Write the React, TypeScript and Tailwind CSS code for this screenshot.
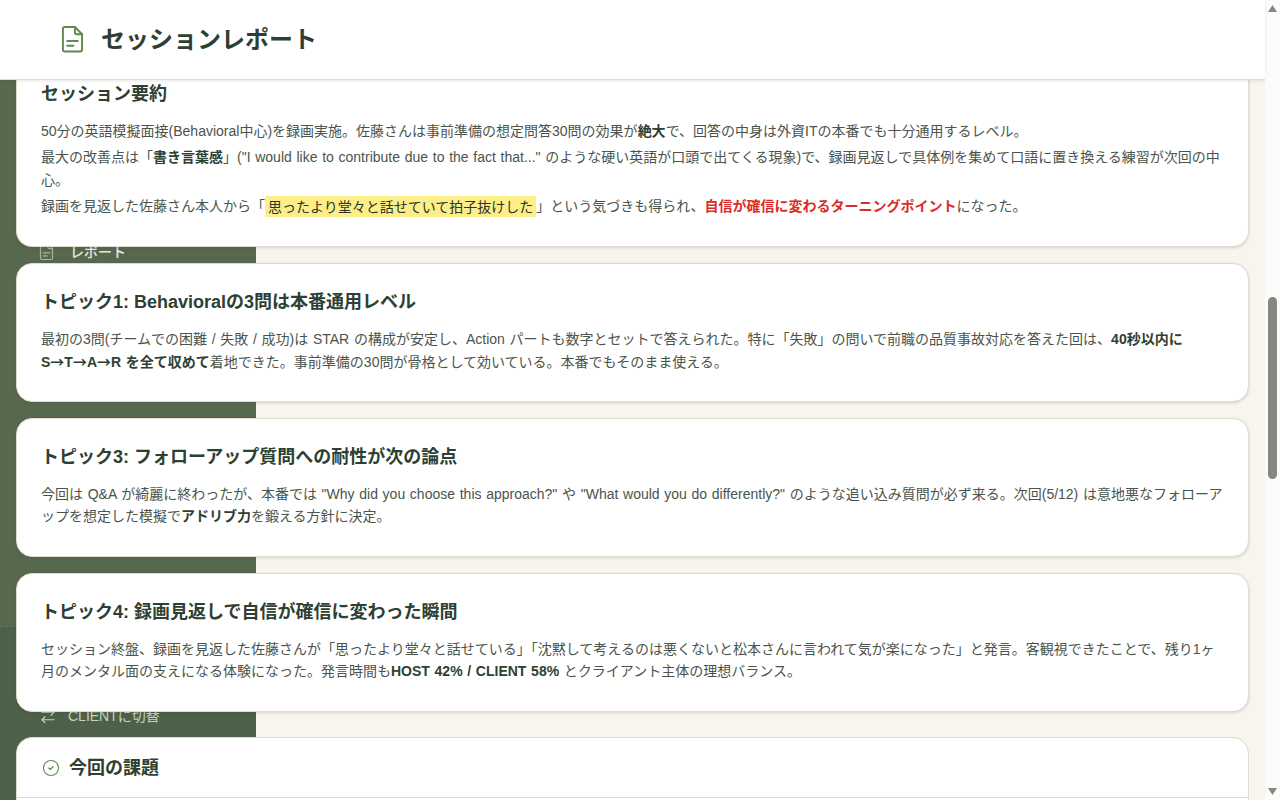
import type { ReactNode } from 'react';
import { ArrowRightLeft, CircleCheck } from 'lucide-react';

const pageFont = "font-['Liberation_Sans','Noto_Sans_CJK_JP',sans-serif]";

function FileIcon({ className }: { className: string }) {
  return (
    <svg viewBox="0 0 24 30" fill="none" stroke="currentColor" strokeWidth="2" strokeLinecap="round" strokeLinejoin="round" className={className}>
      <path d="M4 2h10.5L22 9.5V25.5a2 2 0 0 1-2 2H4a2 2 0 0 1-2-2V4a2 2 0 0 1 2-2z" />
      <path d="M14.5 2v5.5a2 2 0 0 0 2 2H22" />
      <path d="M6.5 16.5h11" />
      <path d="M6.5 21.5h6.5" />
    </svg>
  );
}

function Strong({ children }: { children: ReactNode }) {
  return <strong className="font-bold text-[#2e3f33]">{children}</strong>;
}

function Arrow() {
  return <span className="font-['Noto_Sans_CJK_JP']">→</span>;
}

function TopicCard({ title, children }: { title: string; children: ReactNode }) {
  return (
    <section className="h-[139px] rounded-2xl border border-[#dfdbcd] bg-white px-6 pt-[24px] shadow-[0_1px_3px_rgba(60,60,40,0.18)]">
      <h2 className="text-[18px] leading-[28px] font-bold text-[#2e3f33]">{title}</h2>
      <p className="mt-[12px] text-[14px] leading-[22px] text-[#4b544c] [word-spacing:0.8px]">{children}</p>
    </section>
  );
}

export default function App() {
  return (
    <div className={`flex h-screen overflow-hidden bg-[#f8f4ee] ${pageFont}`}>
      <div className="relative min-w-0 flex-1">
        {/* sidebar sits behind the cards, only slivers of it show */}
        <aside className="absolute top-0 bottom-0 left-0 flex w-[256px] flex-col bg-[#56694f]">
          <div className="h-[626px] shrink-0 pt-[243px] pl-[39px]">
            <div className="flex items-center gap-[16px] text-[14px] leading-[15px] font-medium text-[#e9e8dc]">
              <FileIcon className="h-[18px] w-[15px] text-[#a9b3a3]" />
              <span>レポート</span>
            </div>
          </div>
          <div className="flex-1 border-t border-dashed border-[#65765f] bg-[#4d6049] pt-[80px] pl-[39px]">
            <div className="flex items-center gap-[11px] text-[14px] leading-[18px] text-[#c9d1bd]">
              <ArrowRightLeft size={18} strokeWidth={1.5} />
              <span>CLIENTに切替</span>
            </div>
          </div>
        </aside>

        <div className="relative flex h-full flex-col">
          <header className="z-10 flex h-[80px] shrink-0 items-center gap-[17px] border-b border-[#dcdbd0] bg-white pl-[61px] shadow-[0_1px_3px_rgba(60,60,40,0.12)]">
            <FileIcon className="h-[29px] w-[23px] text-[#5f8a4c]" />
            <h1 className="text-[24px] leading-[32px] font-bold text-[#2e3f33]">セッションレポート</h1>
          </header>

          <div className="flex flex-col px-4">
            <section className="h-[167px] rounded-b-2xl border-x border-b border-[#dfdbcd] bg-white px-6 pt-[1px] shadow-[0_1px_3px_rgba(60,60,40,0.18)]">
              <h2 className="text-[18px] leading-[26px] font-bold text-[#2e3f33]">セッション要約</h2>
              <div className="mt-[13px] flex flex-col gap-[3px] text-[14px] leading-[23px] text-[#4b544c] [word-spacing:0.8px]">
                <p>
                  50分の英語模擬面接(Behavioral中心)を録画実施。佐藤さんは事前準備の想定問答30問の効果が<Strong>絶大</Strong>で、回答の中身は外資ITの本番でも十分通用するレベル。
                </p>
                <p>
                  最大の改善点は「<Strong>書き言葉感</Strong>」("I would like to contribute due to the fact that..." のような硬い英語が口頭で出てくる現象)で、録画見返しで具体例を集めて口語に置き換える練習が次回の中心。
                </p>
                <p>
                  録画を見返した佐藤さん本人から「
                  <mark className="rounded-[2px] bg-[#fdee88] px-[3px] py-[2.5px] text-[#26352a]">思ったより堂々と話せていて拍子抜けした</mark>
                  」という気づきも得られ、<strong className="font-bold text-[#dc2a2a]">自信が確信に変わるターニングポイント</strong>になった。
                </p>
              </div>
            </section>

            <div className="mt-[16px] flex flex-col gap-[16px]">
              <TopicCard title="トピック1: Behavioralの3問は本番通用レベル">
                最初の3問(チームでの困難 / 失敗 / 成功)は STAR の構成が安定し、Action パートも数字とセットで答えられた。特に「失敗」の問いで前職の品質事故対応を答えた回は、<Strong>40秒以内に S<Arrow />T<Arrow />A<Arrow />R を全て収めて</Strong>着地できた。事前準備の30問が骨格として効いている。本番でもそのまま使える。
              </TopicCard>
              <TopicCard title="トピック3: フォローアップ質問への耐性が次の論点">
                今回は Q&amp;A が綺麗に終わったが、本番では "Why did you choose this approach?" や "What would you do differently?" のような追い込み質問が必ず来る。次回(5/12) は意地悪なフォローアップを想定した模擬で<Strong>アドリブ力</Strong>を鍛える方針に決定。
              </TopicCard>
              <TopicCard title="トピック4: 録画見返しで自信が確信に変わった瞬間">
                セッション終盤、録画を見返した佐藤さんが「思ったより堂々と話せている」「沈黙して考えるのは悪くないと松本さんに言われて気が楽になった」と発言。客観視できたことで、残り1ヶ月のメンタル面の支えになる体験になった。発言時間も<Strong>HOST 42% / CLIENT 58%</Strong> とクライアント主体の理想バランス。
              </TopicCard>
            </div>

            <section className="mt-[25px] h-[100px] shrink-0 rounded-t-2xl border border-[#dfdbcd] bg-white">
              <div className="flex h-[60px] items-center gap-[9px] border-b border-[#dcdbd0] px-[25px]">
                <CircleCheck size={18} strokeWidth={1.5} className="text-[#5f8a4c]" />
                <h2 className="text-[18px] leading-[28px] font-bold text-[#2e3f33]">今回の課題</h2>
              </div>
            </section>
          </div>
        </div>
      </div>

      {/* page scrollbar */}
      <div className="flex w-[15px] shrink-0 flex-col items-center bg-[#fbfbfb]">
        <svg viewBox="0 0 9 7" className="mt-[5px] h-[7px] w-[9px] fill-[#84887f]">
          <path d="M4.5 0 9 7H0z" />
        </svg>
        <div className="mt-[285px] h-[182px] w-[9px] rounded-full bg-[#84887f]" />
        <svg viewBox="0 0 9 7" className="mt-auto mb-[5px] h-[7px] w-[9px] fill-[#84887f]">
          <path d="M0 0h9L4.5 7z" />
        </svg>
      </div>
    </div>
  );
}
